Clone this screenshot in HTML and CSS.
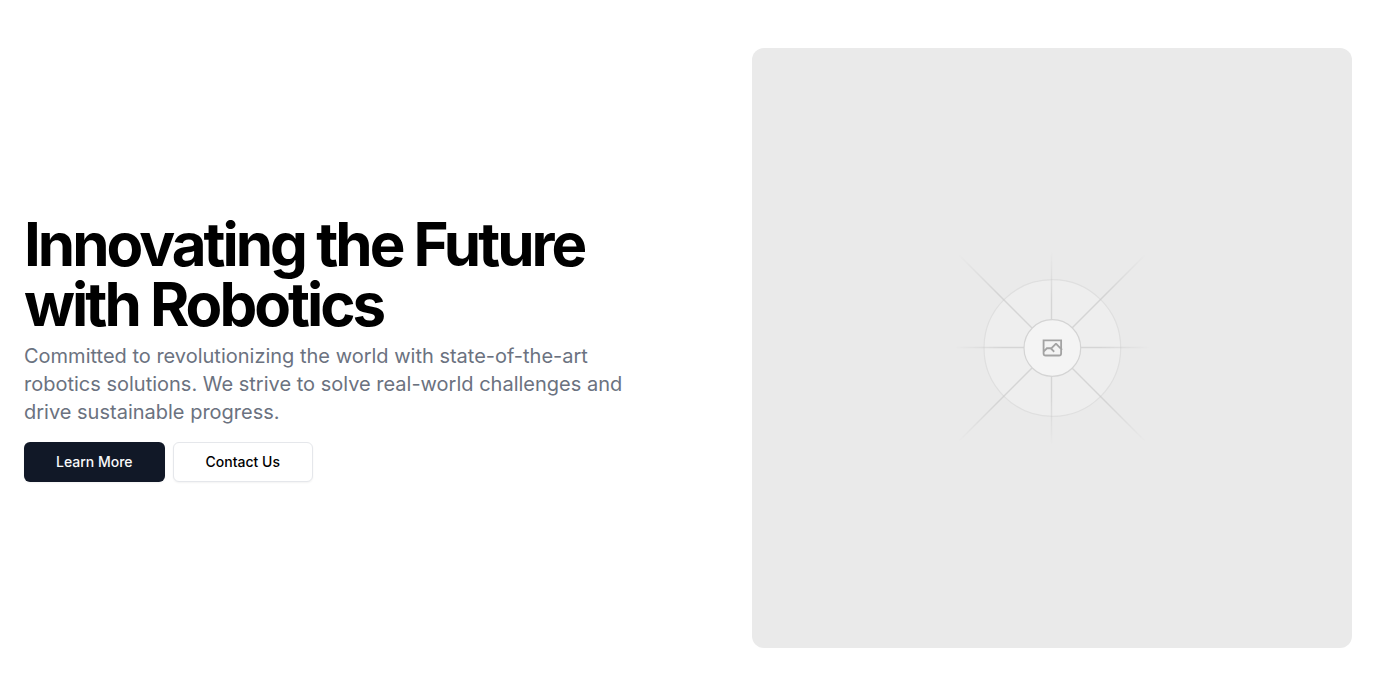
FILE: index.html
```html
<!DOCTYPE html>
<html lang="en">
<head>
<meta charset="utf-8">
<meta name="viewport" content="width=device-width, initial-scale=1">
<title>Innovating the Future with Robotics</title>
<link rel="stylesheet" href="styles.css">
</head>
<body>
<section class="hero">
  <div class="hero-copy">
    <div class="hero-text">
      <h1 class="hero-title">Innovating the Future with Robotics</h1>
      <p class="hero-lead">Committed to revolutionizing the world with state-of-the-art robotics solutions. We strive to solve real-world challenges and drive sustainable progress.</p>
    </div>
    <div class="hero-actions">
      <a class="button button-primary" href="#learn">Learn More</a>
      <a class="button button-outline" href="#contact">Contact Us</a>
    </div>
  </div>
  <svg class="hero-image" viewBox="0 0 1200 1200" fill="none" role="img" aria-label="Hero">
    <defs>
      <linearGradient id="fade-d1" gradientUnits="userSpaceOnUse" x1="413" y1="413" x2="787" y2="787"><stop stop-color="#C9C9C9" stop-opacity="0"/><stop offset=".208" stop-color="#C9C9C9"/><stop offset=".792" stop-color="#C9C9C9"/><stop offset="1" stop-color="#C9C9C9" stop-opacity="0"/></linearGradient>
      <linearGradient id="fade-d2" gradientUnits="userSpaceOnUse" x1="787" y1="413" x2="413" y2="787"><stop stop-color="#C9C9C9" stop-opacity="0"/><stop offset=".208" stop-color="#C9C9C9"/><stop offset=".792" stop-color="#C9C9C9"/><stop offset="1" stop-color="#C9C9C9" stop-opacity="0"/></linearGradient>
      <linearGradient id="fade-h" gradientUnits="userSpaceOnUse" x1="405" y1="599" x2="795" y2="599"><stop stop-color="#C9C9C9" stop-opacity="0"/><stop offset=".25" stop-color="#C9C9C9"/><stop offset=".75" stop-color="#C9C9C9"/><stop offset="1" stop-color="#C9C9C9" stop-opacity="0"/></linearGradient>
      <linearGradient id="fade-v" gradientUnits="userSpaceOnUse" x1="599" y1="405" x2="599" y2="795"><stop stop-color="#C9C9C9" stop-opacity="0"/><stop offset=".25" stop-color="#C9C9C9"/><stop offset=".75" stop-color="#C9C9C9"/><stop offset="1" stop-color="#C9C9C9" stop-opacity="0"/></linearGradient>
    </defs>
    <rect width="1200" height="1200" fill="#EAEAEA"/>
    <circle cx="600.709" cy="600" r="136.733" fill="#EEEEEE" stroke="#DFDFDF" stroke-width="2.418"/>
    <g opacity=".65" stroke-width="2.8">
      <path stroke="url(#fade-d1)" d="M413 413 787 787"/>
      <path stroke="url(#fade-d2)" d="M787 413 413 787"/>
      <path stroke="url(#fade-h)" d="M405 599H795"/>
      <path stroke="url(#fade-v)" d="M599 405V795"/>
    </g>
    <circle cx="600.709" cy="600" r="56.7" fill="#F4F4F4" stroke="#D4D4D4" stroke-width="2.418"/>
    <path fill="#A3A3A3" fill-rule="evenodd" d="M616.426 586.58h-31.434v16.176l3.553-3.554.531-.531h9.068l.074-.074 8.463-8.463h2.565l7.18 7.181V586.58Zm-15.715 14.654 3.698 3.699 1.283 1.282-2.565 2.565-1.282-1.283-5.2-5.199h-6.066l-5.514 5.514-.073.073v2.876a2.418 2.418 0 0 0 2.418 2.418h26.598a2.418 2.418 0 0 0 2.418-2.418v-8.317l-8.463-8.463-7.181 7.181-.071.072Zm-19.347 5.442v4.085a6.045 6.045 0 0 0 6.046 6.045h26.598a6.044 6.044 0 0 0 6.045-6.045v-7.108l1.356-1.355-1.282-1.283-.074-.073v-17.989h-38.689v23.43l-.146.146.146.147Z"/>
  </svg>
</section>
</body>
</html>
```
FILE: styles.css
```css
* { box-sizing: border-box; }

body {
  margin: 0;
  background: #fff;
  color: #000;
  font-family: Inter, sans-serif;
}

.hero {
  display: grid;
  grid-template-columns: 1fr 600px;
  gap: 48px;
  padding: 48px 24px;
}

.hero-copy {
  display: flex;
  flex-direction: column;
  justify-content: center;
  gap: 16px;
}

.hero-text {
  display: flex;
  flex-direction: column;
  gap: 8px;
}

.hero-title {
  margin: 0;
  font-size: 60px;
  line-height: 60px;
  font-weight: 700;
  letter-spacing: -0.05em;
}

.hero-lead {
  max-width: 600px;
  margin: 0;
  color: #6b7280;
  font-size: 20px;
  line-height: 28px;
}

.hero-actions {
  display: flex;
  gap: 8px;
}

.button {
  display: inline-flex;
  align-items: center;
  justify-content: center;
  height: 40px;
  padding: 0 32px;
  border-radius: 6px;
  font-size: 14px;
  line-height: 20px;
  font-weight: 500;
  text-decoration: none;
  box-shadow: 0 1px 2px rgb(0 0 0 / 5%);
}

.button-primary {
  background: #111827;
  color: #f9fafb;
}

.button-outline {
  border: 1px solid #e5e7eb;
  background: #fff;
  color: #000;
}

.hero-image {
  display: block;
  width: 100%;
  border-radius: 12px;
}

@media (max-width: 1023px) {
  .hero { grid-template-columns: 1fr; }
}
```
